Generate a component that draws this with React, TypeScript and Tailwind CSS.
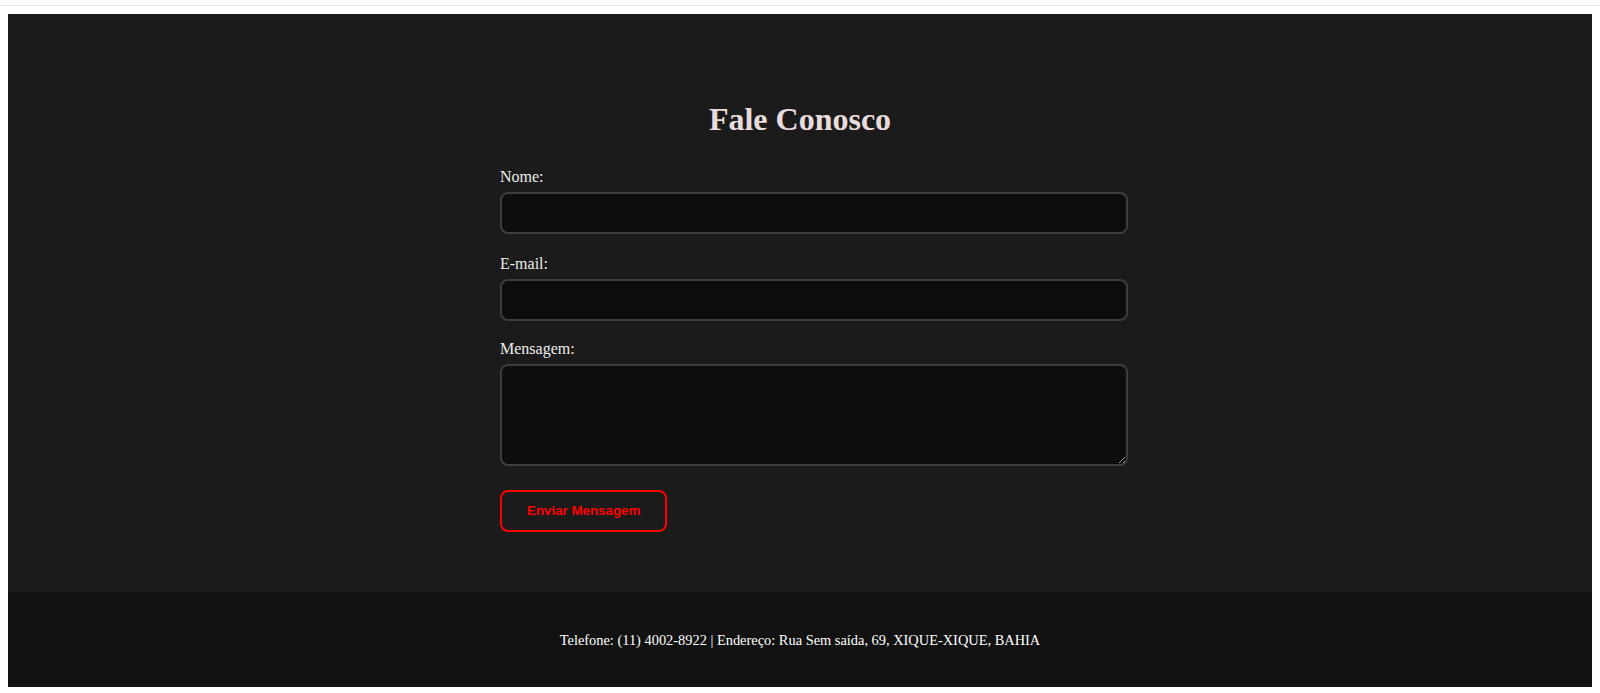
const serif = { fontFamily: '"Liberation Serif", "Times New Roman", serif' };

export default function App() {
  return (
    <div className="min-h-screen bg-white" style={serif}>
      {/* barra superior */}
      <div className="h-[6px] border-b border-[#e3e3e3]" />

      <div className="px-[8px] pt-[8px]">
        {/* Contato */}
        <section className="bg-[#1b1b1b] pt-[87px] pb-[60px]">
          <div className="w-[600px] mx-auto">
            <h2 className="text-center text-[32px] leading-[37px] font-bold text-[#e8dcdc] mb-[29px]">
              Fale Conosco
            </h2>

            <form className="w-[628px]" onSubmit={(e) => e.preventDefault()}>
              <label htmlFor="nome" className="block text-[16px] leading-[20px] text-[#ececec] mb-[5px]">
                Nome:
              </label>
              <input
                id="nome"
                type="text"
                className="block w-full h-[42px] px-[12px] bg-[#0d0d0d] border-2 border-[#3d3d3d] rounded-lg text-white outline-none mb-[20px]"
              />

              <label htmlFor="email" className="block text-[16px] leading-[20px] text-[#ececec] mb-[5px]">
                E-mail:
              </label>
              <input
                id="email"
                type="email"
                className="block w-full h-[42px] px-[12px] bg-[#0d0d0d] border-2 border-[#3d3d3d] rounded-lg text-white outline-none mb-[18px]"
              />

              <label htmlFor="mensagem" className="block text-[16px] leading-[20px] text-[#ececec] mb-[5px]">
                Mensagem:
              </label>
              <textarea
                id="mensagem"
                className="block w-full h-[102px] px-[12px] py-[10px] bg-[#0d0d0d] border-2 border-[#3d3d3d] rounded-lg text-white outline-none mb-[24px]"
              />

              <button
                type="submit"
                className="h-[42px] px-[25px] border-2 border-[#ff0000] rounded-lg bg-transparent text-[#ff0000] text-[13.33px] font-bold"
                style={{ fontFamily: '"Liberation Sans", Arial, sans-serif' }}
              >
                Enviar Mensagem
              </button>
            </form>
          </div>
        </section>

        {/* Rodape */}
        <footer className="h-[95px] bg-[#121212] flex items-center justify-center">
          <p className="text-[14.4px] leading-[18px] text-white">
            Telefone: (11) 4002-8922 | Endereço: Rua Sem saída, 69, XIQUE-XIQUE, BAHIA
          </p>
        </footer>
      </div>
    </div>
  );
}
